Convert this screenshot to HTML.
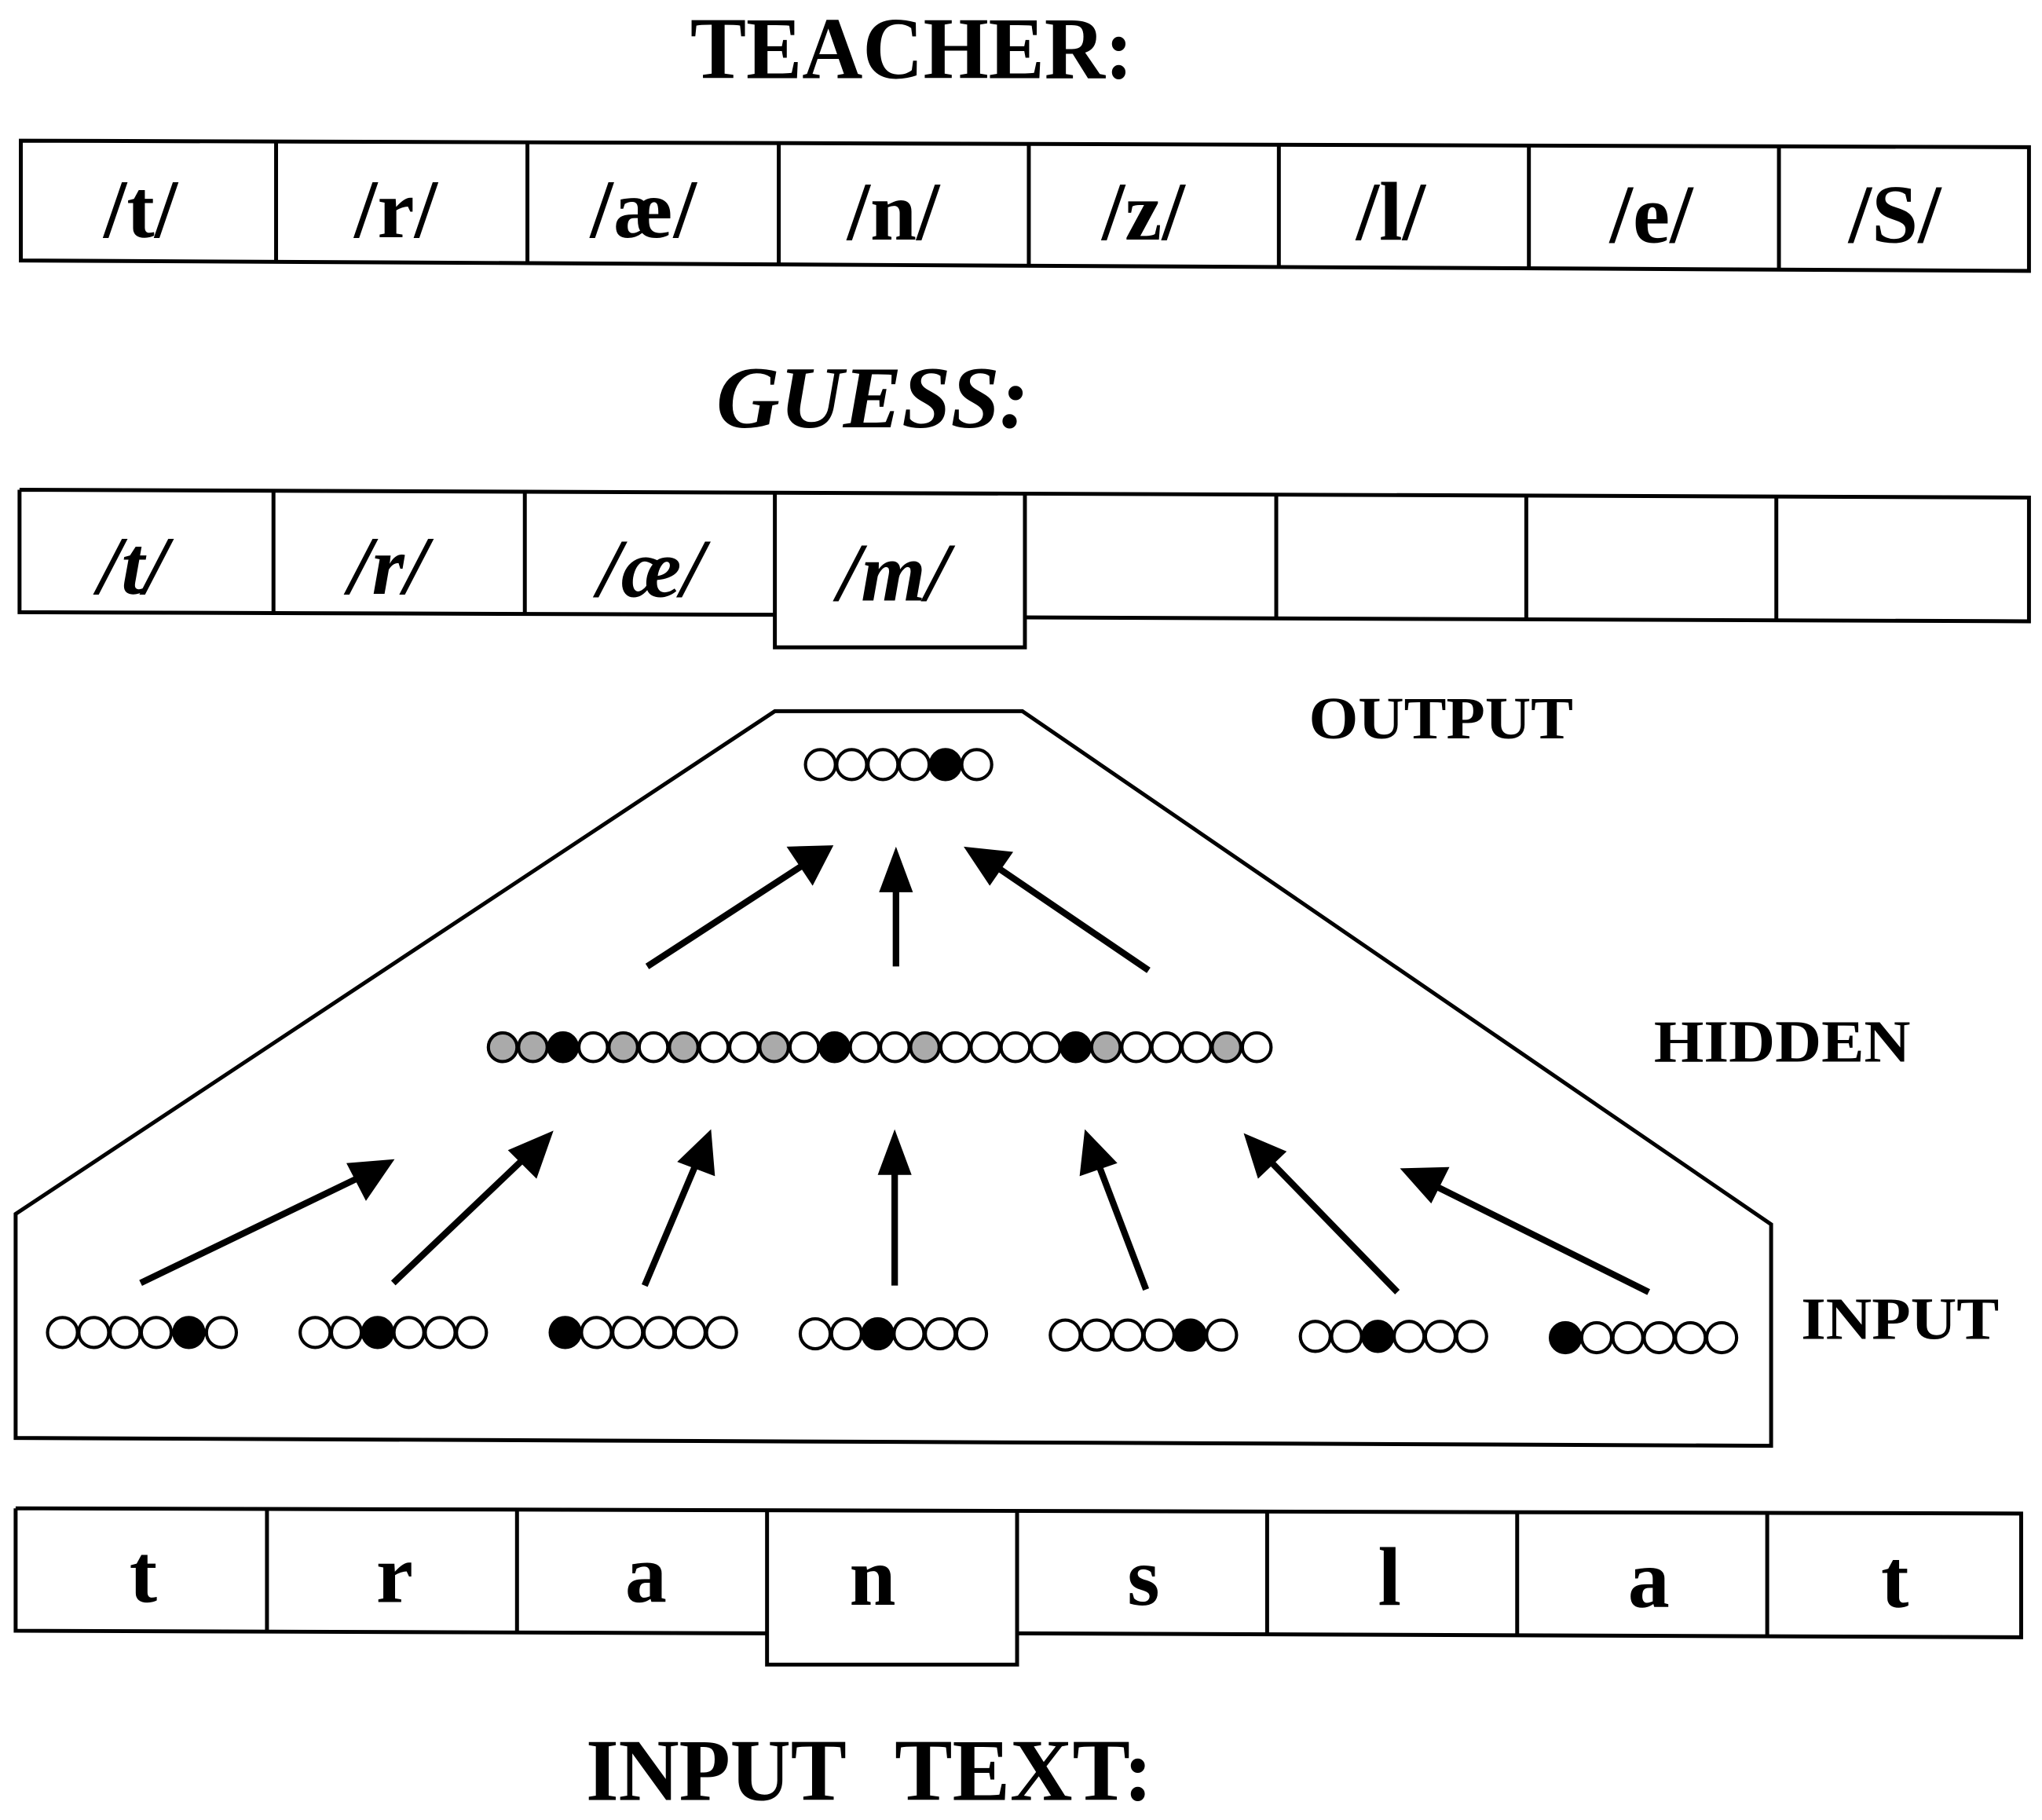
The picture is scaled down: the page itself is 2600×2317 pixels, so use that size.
<!DOCTYPE html>
<html><head><style>html,body{margin:0;padding:0;background:#fff}svg{display:block}</style></head><body>
<svg width="2600" height="2317" viewBox="0 0 1568 1397.3" preserveAspectRatio="none" xmlns="http://www.w3.org/2000/svg" font-family="'Liberation Serif',serif" font-weight="bold">
<g fill="none" stroke="#000" stroke-width="3">
<polygon points="16,108 1558,113 1558,208 16,200"/>
<path d="M212,109V202 M405,110V203 M598,110V204 M790,111V205 M982,111V206 M1174,112V207 M1366,112V208"/>
<path d="M15,376L1558,382V477L787,474 M595,472L15,470V376"/>
<path d="M210,377V471 M403,378V472 M595,378V497H787V380 M980,380V475 M1172,381V476 M1364,381V477"/>
<polygon points="595,546 785,546 1360,940 1360,1110 12,1104 12,932"/>
<path d="M12,1158L1552,1162V1257L781,1254 M589,1254L12,1252V1158"/>
<path d="M205,1158V1253 M397,1159V1253 M589,1159V1278H781V1160 M973,1160V1255 M1165,1161V1256 M1357,1161V1257"/>
</g>
<g font-size="68">
<text x="530" y="60" textLength="340" lengthAdjust="spacingAndGlyphs">TEACHER:</text>
<text x="550" y="328" textLength="240" lengthAdjust="spacingAndGlyphs" font-style="italic">GUESS:</text>
<text x="450" y="1382" textLength="200" lengthAdjust="spacingAndGlyphs">INPUT</text>
<text x="687" y="1382" textLength="198" lengthAdjust="spacingAndGlyphs">TEXT:</text>
</g>
<g font-size="64" text-anchor="middle">
<text x="108" y="182">/t/</text><text x="304" y="182">/r/</text><text x="494" y="182">/æ/</text><text x="686" y="184">/n/</text><text x="878" y="184">/z/</text><text x="1068" y="184">/l/</text><text x="1268" y="186">/e/</text><text x="1455" y="186">/S/</text>
</g>
<g font-size="64" text-anchor="middle" font-style="italic">
<text x="102" y="456">/t/</text><text x="298" y="456">/r/</text><text x="500" y="458">/æ/</text><text x="686" y="461">/m/</text>
</g>
<g font-size="64" text-anchor="middle">
<text x="110" y="1230">t</text><text x="303" y="1230">r</text><text x="496" y="1230">a</text><text x="670" y="1232">n</text><text x="878" y="1232">s</text><text x="1067" y="1232">l</text><text x="1266" y="1234">a</text><text x="1455" y="1234">t</text>
</g>
<g font-size="46">
<text x="1005" y="567" textLength="203" lengthAdjust="spacingAndGlyphs">OUTPUT</text>
<text x="1270" y="815" textLength="197" lengthAdjust="spacingAndGlyphs">HIDDEN</text>
<text x="1383" y="1028" textLength="152" lengthAdjust="spacingAndGlyphs">INPUT</text>
</g>
<g stroke="#000" stroke-width="2.5" fill="#fff">
<circle cx="630" cy="587" r="11.5"/><circle cx="654" cy="587" r="11.5"/><circle cx="678" cy="587" r="11.5"/><circle cx="702" cy="587" r="11.5"/><circle cx="726" cy="587" r="11.5" fill="#000"/><circle cx="750" cy="587" r="11.5"/>
</g>
<g stroke="#000" stroke-width="2.5" fill="#fff">
<circle cx="386" cy="804" r="11" fill="#aaa"/><circle cx="409.2" cy="804" r="11" fill="#aaa"/><circle cx="432.3" cy="804" r="11" fill="#000"/><circle cx="455.5" cy="804" r="11"/><circle cx="478.6" cy="804" r="11" fill="#aaa"/><circle cx="501.8" cy="804" r="11"/><circle cx="525" cy="804" r="11" fill="#aaa"/><circle cx="548.1" cy="804" r="11"/><circle cx="571.3" cy="804" r="11"/><circle cx="594.4" cy="804" r="11" fill="#aaa"/><circle cx="617.6" cy="804" r="11"/><circle cx="640.8" cy="804" r="11" fill="#000"/><circle cx="663.9" cy="804" r="11"/><circle cx="687.1" cy="804" r="11"/><circle cx="710.2" cy="804" r="11" fill="#aaa"/><circle cx="733.4" cy="804" r="11"/><circle cx="756.6" cy="804" r="11"/><circle cx="779.7" cy="804" r="11"/><circle cx="802.9" cy="804" r="11"/><circle cx="826" cy="804" r="11" fill="#000"/><circle cx="849.2" cy="804" r="11" fill="#aaa"/><circle cx="872.4" cy="804" r="11"/><circle cx="895.5" cy="804" r="11"/><circle cx="918.7" cy="804" r="11"/><circle cx="941.8" cy="804" r="11" fill="#aaa"/><circle cx="965" cy="804" r="11"/>
</g>
<g stroke="#000" stroke-width="2.5" fill="#fff">
<circle cx="48" cy="1023" r="11.5"/><circle cx="72" cy="1023" r="11.5"/><circle cx="96" cy="1023" r="11.5"/><circle cx="120" cy="1023" r="11.5"/><circle cx="145" cy="1023" r="11.5" fill="#000"/><circle cx="170" cy="1023" r="11.5"/>
<circle cx="242" cy="1023" r="11.5"/><circle cx="266" cy="1023" r="11.5"/><circle cx="290" cy="1023" r="11.5" fill="#000"/><circle cx="314" cy="1023" r="11.5"/><circle cx="338" cy="1023" r="11.5"/><circle cx="362" cy="1023" r="11.5"/>
<circle cx="434" cy="1023" r="11.5" fill="#000"/><circle cx="458" cy="1023" r="11.5"/><circle cx="482" cy="1023" r="11.5"/><circle cx="506" cy="1023" r="11.5"/><circle cx="530" cy="1023" r="11.5"/><circle cx="554" cy="1023" r="11.5"/>
<circle cx="626" cy="1024" r="11.5"/><circle cx="650" cy="1024" r="11.5"/><circle cx="674" cy="1024" r="11.5" fill="#000"/><circle cx="698" cy="1024" r="11.5"/><circle cx="722" cy="1024" r="11.5"/><circle cx="746" cy="1024" r="11.5"/>
<circle cx="818" cy="1025" r="11.5"/><circle cx="842" cy="1025" r="11.5"/><circle cx="866" cy="1025" r="11.5"/><circle cx="890" cy="1025" r="11.5"/><circle cx="914" cy="1025" r="11.5" fill="#000"/><circle cx="938" cy="1025" r="11.5"/>
<circle cx="1010" cy="1026" r="11.5"/><circle cx="1034" cy="1026" r="11.5"/><circle cx="1058" cy="1026" r="11.5" fill="#000"/><circle cx="1082" cy="1026" r="11.5"/><circle cx="1106" cy="1026" r="11.5"/><circle cx="1130" cy="1026" r="11.5"/>
<circle cx="1202" cy="1027" r="11.5" fill="#000"/><circle cx="1226" cy="1027" r="11.5"/><circle cx="1250" cy="1027" r="11.5"/><circle cx="1274" cy="1027" r="11.5"/><circle cx="1298" cy="1027" r="11.5"/><circle cx="1322" cy="1027" r="11.5"/>
</g>
<g stroke="#000" stroke-width="5" fill="#000">
<line x1="497" y1="742" x2="620" y2="662"/><polygon points="640,649 604,650 624,680" stroke="none"/>
<line x1="688" y1="742" x2="688" y2="675"/><polygon points="688,650 675,685 701,685" stroke="none"/>
<line x1="882" y1="745" x2="760" y2="662"/><polygon points="740,650 760,680 778,654" stroke="none"/>
<line x1="108" y1="985" x2="280" y2="902"/><polygon points="303,890 266,893 281,922" stroke="none"/>
<line x1="302" y1="985" x2="406" y2="886"/><polygon points="425,868 390,883 412,905" stroke="none"/>
<line x1="495" y1="987" x2="536" y2="890"/><polygon points="546,867 520,892 549,903" stroke="none"/>
<line x1="687" y1="987" x2="687" y2="892"/><polygon points="687,867 674,902 700,902" stroke="none"/>
<line x1="880" y1="990" x2="842" y2="890"/><polygon points="833,867 829,903 858,893" stroke="none"/>
<line x1="1073" y1="992" x2="972" y2="888"/><polygon points="955,870 966,905 988,884" stroke="none"/>
<line x1="1266" y1="992" x2="1097" y2="908"/><polygon points="1075,897 1099,924 1113,896" stroke="none"/>
</g>
</svg>
</body></html>
